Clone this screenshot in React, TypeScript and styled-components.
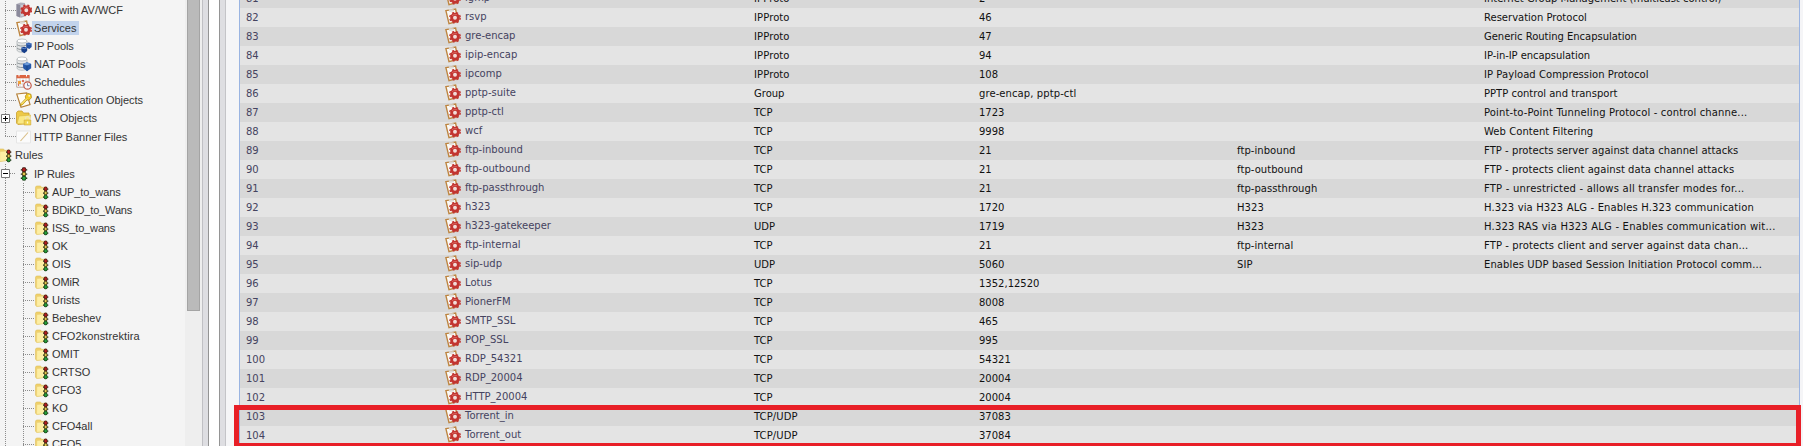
import React from 'react';
import styled, { createGlobalStyle } from 'styled-components';

const GlobalStyle = createGlobalStyle`
  * { box-sizing: border-box; }
  html, body { margin: 0; height: 446px; overflow: hidden; background: #f4f4f4; }
`;

const Page = styled.div`
  position: relative;
  display: flex;
  width: 1803px;
  height: 446px;
  overflow: hidden;
`;

const Sidebar = styled.nav`
  width: 185px;
  height: 446px;
  flex: none;
  overflow: hidden;
  padding-top: 1px;
  background: #f4f4f4;
  font: 11px/18px "Liberation Sans", Arial, sans-serif;
  color: #333;
`;

const TreeRow = styled.div<{ $h?: number }>`
  display: flex;
  align-items: center;
  height: ${p => p.$h ?? 18}px;
  white-space: pre;
`;

const RootRow = styled(TreeRow)`
  margin-left: -2px;
`;

const Guide = styled.span<{ $w: number; $branch?: boolean; $end?: boolean }>`
  flex: none;
  align-self: stretch;
  width: ${p => p.$w}px;
  background:
    repeating-linear-gradient(180deg, #8c8c8c 0 1px, transparent 1px 2px) 5px 0 / 1px ${p => (p.$end ? '50%' : '100%')} no-repeat,
    repeating-linear-gradient(90deg, #8c8c8c 0 1px, transparent 1px 2px) 5px 50% / ${p => (p.$branch ? '11px' : '0')} 1px no-repeat;
`;

const ToggleCell = styled.span`
  flex: none;
  display: flex;
  align-items: center;
  width: 16px;
  padding-left: 1px;
  align-self: stretch;
  background:
    repeating-linear-gradient(180deg, #8c8c8c 0 1px, transparent 1px 2px) 5px 0 / 1px 100% no-repeat,
    repeating-linear-gradient(90deg, #8c8c8c 0 1px, transparent 1px 2px) 10px 50% / 6px 1px no-repeat;
`;

const Toggle = styled.svg`
  display: block;
  flex: none;
`;

const Icon = styled.svg`
  display: block;
  flex: none;
`;

const TreeLabel = styled.span<{ $selected?: boolean; $spacing?: number }>`
  height: 14px;
  line-height: 14px;
  padding: 0 2px;
  letter-spacing: ${p => p.$spacing ?? 0}px;
  background: ${p => (p.$selected ? '#c2d3ec' : 'transparent')};
`;

const ScrollTrack = styled.div`
  flex: none;
  width: 17px;
  padding-left: 2px;
  background: #eeeeee;
`;

const ScrollThumb = styled.div`
  width: 13px;
  height: 311px;
  background: #bababa;
  border: solid #a4a4a4;
  border-width: 0 1px 1px;
`;

const Splitter = styled.div`
  flex: none;
  display: flex;
  justify-content: space-between;
  width: 23px;
  background: #fff;
`;

const SplitterEdge = styled.div<{ $side: 'left' | 'right' }>`
  width: ${p => (p.$side === 'left' ? 7 : 6)}px;
  background: #dedee2;
  border: solid #949494;
  border-width: ${p => (p.$side === 'left' ? '0 1px 0 1px' : '0 0 0 1px')};
  border-left-color: ${p => (p.$side === 'left' ? '#c0c0c4' : '#949494')};
`;

const Main = styled.main`
  flex: 1;
  padding: 0 3px 0 13px;
  border-left: 1px solid #c4c4c8;
  background: #f5f5f7;
`;

const Table = styled.div`
  height: 446px;
  overflow: hidden;
  border: solid #9ab4e2;
  border-width: 0 1px;
  font: 10px/19px "DejaVu Sans", Verdana, sans-serif;
  color: #111;
`;

const Rows = styled.div`
  margin-top: -11px;
`;

const Row = styled.div<{ $dark: boolean }>`
  display: grid;
  grid-template-columns: 199px 309px 225px 258px 247px 1fr;
  height: 19px;
  padding-left: 6px;
  background: ${p => (p.$dark ? '#d8d8d8' : '#e4e4e4')};
`;

const Cell = styled.span<{ $muted?: boolean; $spacing?: number }>`
  white-space: pre;
  color: ${p => (p.$muted ? '#45435f' : '#111')};
  letter-spacing: ${p => p.$spacing ?? 0}px;
`;

const NameCell = styled.span`
  display: flex;
  gap: 4px;
  height: 17px;
  line-height: 17px;
  color: #45435f;
  white-space: pre;
`;

const Highlight = styled.div`
  position: absolute;
  left: 234px;
  top: 405px;
  width: 1567px;
  height: 43px;
  border: 5px solid #e81f27;
`;

const gear = (cx: number, cy: number, r: number) => (
  <>
    <circle cx={cx} cy={cy} r={r - 1.9} fill="#f1dcd9" stroke="#c23430" strokeWidth="2.9" />
    <circle cx={cx} cy={cy} r={r - 0.1} fill="none" stroke="#c23430" strokeWidth="1.4" strokeDasharray={`${(r * Math.PI) / 8} ${(r * Math.PI) / 8}`} />
    <path d={`M${cx - 3} ${cy - 2}Q${cx - 1} ${cy - 4} ${cx + 2} ${cy - 3}`} fill="none" stroke="#de7069" strokeWidth=".8" />
  </>
);

const ServiceIcon = () => (
  <Icon width="16" height="17" viewBox="0 0 16 17">
    <path d="M.9 2.6 10.6 1 13 13.2 4 15.6z" fill="#fbfaf7" stroke="#bd8541" strokeWidth="1.4" />
    <path d="M3.6 1.3h5l.5 2-4.6.7z" fill="#dedad4" />
    {gear(10, 9.7, 5.3)}
  </Icon>
);

const AlgIcon = () => (
  <Icon width="16" height="16" viewBox="0 0 16 16">
    <path d="M.5 2 4.5.5 9 1v13.5l-4 1.3L.5 14z" fill="#b3b2be" />
    <path d="M.5 2 4 3v12.6L.5 14z" fill="#8b8a9b" />
    <path d="M5 4h3M5 6h3M5 13h3" stroke="#e3e3ea" />
    {gear(10.3, 8.3, 5.3)}
  </Icon>
);

const Drum = () => (
  <>
    <path d="M1 3v9c0 3 10 3 10 0V3z" fill="#e4e6e7" stroke="#a8adb0" strokeWidth=".7" />
    <ellipse cx="6" cy="3" rx="5" ry="2" fill="#fff" stroke="#a8adb0" strokeWidth=".7" />
    <path d="M1 6.5c1 2 9 2 10 0M1 10c1 2 9 2 10 0" fill="none" stroke="#8d9497" />
  </>
);

const IpPoolIcon = () => (
  <Icon width="16" height="16" viewBox="0 0 16 16">
    <Drum />
    <path d="M10.2 5.3 12.8 4.6l2.8.8v3.6L13.3 11l-3-1.4z" fill="#2453a5" />
    <path d="m5.4 9.6 2.7-.8 3 1V13l-2.7 2.2-3-1.9z" fill="#173f8b" />
    <path d="m10.5 5.6 2.5.7 2.3-.7M5.7 10l2.6.7 2.4-.7" fill="none" stroke="#6d95d8" strokeWidth=".8" />
  </Icon>
);

const NatPoolIcon = () => (
  <Icon width="16" height="16" viewBox="0 0 16 16">
    <Drum />
    <path d="m7 8 4-1.8L15.2 8v4.3L11 15.3l-3.8-3z" fill="#2458a8" />
    <path d="m7 8 4 1.4L15 7.8l-4-1.5z" fill="#6d9bd8" />
    <path d="M11 9.4v5.4" stroke="#174787" />
  </Icon>
);

const ScheduleIcon = () => (
  <Icon width="16" height="16" viewBox="0 0 16 16">
    <path d="M.7 1.7h12.5v11.5H.7z" fill="#fff" stroke="#b5a6a2" />
    <path d="M.5 1h13v3.3H.5z" fill="#dc6542" />
    <path d="M3 .5v2M10.5.5v2" stroke="#fff" />
    <path d="M4 4v9M7 4v9M10 4v5M1 7h12M1 10h8" stroke="#cbc3bf" strokeWidth=".7" />
    <path d="M2 7h3v3H2z" fill="#f1a13a" />
    <path d="M6 6h2v2H6zM2 10h1v2H2z" fill="#d7705d" />
    <circle cx="11.5" cy="11.5" r="3.7" fill="#f6f6fb" stroke="#c45a4a" strokeWidth="1.2" />
    <path d="M11.5 9.3v2.4h2" fill="none" stroke="#77809c" />
  </Icon>
);

const AuthIcon = () => (
  <Icon width="16" height="16" viewBox="0 0 16 16">
    <path d="M.7 2 10.7.8 14 12.5 5 15.2z" fill="#fffdf5" stroke="#b5813a" strokeWidth="1.2" />
    <path d="M5 11.5 9.7 6.6 9.3 4 11.8 1.3l3.2 1 .5 3.4L13 8.2l-2-.2-4.8 5L4 13.6z" fill="#f3cc25" stroke="#aa851b" strokeWidth=".7" />
    <path d="m5.5 12 5.5-5.5" stroke="#fff19a" />
    <circle cx="13.2" cy="3.8" r=".9" fill="#fff6cf" />
  </Icon>
);

const VpnIcon = () => (
  <Icon width="16" height="16" viewBox="0 0 16 16">
    <path d="M.5 2.5 2 1h4l1.5 2H13v10.5L2 14.5.5 13z" fill="#edc947" stroke="#c9a030" strokeWidth=".8" />
    <path d="m3 6 11.5-1-1.2 9L1 13.8z" fill="#fae883" stroke="#d9b640" strokeWidth=".6" />
    <path d="M9.5 10.2V8.6c0-2.6 4-2.6 4 0v1.6" fill="none" stroke="#efe5b8" strokeWidth="1.2" />
    <path d="M8.2 10h6.6v5H8.2z" fill="#f3d650" stroke="#cda638" strokeWidth=".6" />
    <path d="M11.5 11.5v2" stroke="#fffbd9" strokeWidth="1.3" />
  </Icon>
);

const BannerIcon = () => (
  <Icon width="16" height="16" viewBox="0 0 16 16">
    <path d="M.5 2h14v12H.5z" fill="#fbfbfb" stroke="#e6e6e6" />
    <path d="M4.5 12 12 3.5" stroke="#d8bd85" strokeWidth="1.1" />
  </Icon>
);

const Lamps = () => (
  <>
    <path d="M1.6 1h3.8v13.5H1.6z" fill="#28301c" />
    <path d="M0 3.5h7M0 8h7M0 12.3h7" stroke="#26321c" strokeWidth="1.4" />
    <circle cx="3.5" cy="3.2" r="2.1" fill="#b81c1e" stroke="#4d1712" strokeWidth=".8" />
    <circle cx="3.5" cy="7.7" r="1.9" fill="#e7c84e" stroke="#4c4114" strokeWidth=".8" />
    <circle cx="3.5" cy="12.2" r="2.1" fill="#27a23c" stroke="#164b1b" strokeWidth=".8" />
  </>
);

const LampIcon = () => (
  <Icon width="16" height="16" viewBox="0 0 16 16">
    <g transform="translate(4.8 .6) scale(.92 .95)"><Lamps /></g>
  </Icon>
);

const FolderIcon = () => (
  <Icon width="15" height="16" viewBox="0 0 15 16">
    <path d="M.4 3.2 1.4 2h4.2l1 1.5 5-.5v10L2 14.4.4 13.2z" fill="#f0d06a" stroke="#dcbf5e" strokeWidth=".6" />
    <path d="m1.8 4.6 9.8-.8-.4 9.6-9.6 1z" fill="#fdeea4" stroke="#e6cd74" strokeWidth=".5" />
    <g transform="translate(8 2) scale(.76 .9)"><Lamps /></g>
  </Icon>
);

const ToggleBox = ({ plus }: { plus?: boolean }) => (
  <Toggle width="9" height="9" viewBox="0 0 9 9">
    <path d="M.5.5h8v8h-8z" fill="#fff" stroke="#777" />
    <path d={plus ? 'M2 4.5h5M4.5 2v5' : 'M2 4.5h5'} stroke="#000" />
  </Toggle>
);

const objects: [string, React.FC, number, number][] = [
  ['ALG with AV/WCF', AlgIcon, 18, 0],
  ['Services', ServiceIcon, 18, 0.05],
  ['IP Pools', IpPoolIcon, 18, -0.15],
  ['NAT Pools', NatPoolIcon, 18, 0],
  ['Schedules', ScheduleIcon, 18, 0],
  ['Authentication Objects', AuthIcon, 18, -0.05],
  ['VPN Objects', VpnIcon, 18, 0],
  ['HTTP Banner Files', BannerIcon, 19, 0],
];

const ruleFolders: [string, number][] = [
  ['AUP_to_wans', -0.1],
  ['BDiKD_to_Wans', -0.15],
  ['ISS_to_wans', -0.15],
  ['OK', 0],
  ['OIS', 0],
  ['OMiR', -0.1],
  ['Urists', 0],
  ['Bebeshev', 0],
  ['CFO2konstrektira', 0.1],
  ['OMIT', 0],
  ['CRTSO', 0],
  ['CFO3', 0],
  ['KO', 0],
  ['CFO4all', 0],
  ['CFO5', 0],
];

type Service = { name: string; type: string; port: string; alg?: string; note?: string; spacing?: number };

const services: Service[] = [
  { name: 'igmp', type: 'IPProto', port: '2', note: 'Internet Group Management (multicast control)' },
  { name: 'rsvp', type: 'IPProto', port: '46', note: 'Reservation Protocol' },
  { name: 'gre-encap', type: 'IPProto', port: '47', note: 'Generic Routing Encapsulation', spacing: -0.03 },
  { name: 'ipip-encap', type: 'IPProto', port: '94', note: 'IP-in-IP encapsulation', spacing: -0.06 },
  { name: 'ipcomp', type: 'IPProto', port: '108', note: 'IP Payload Compression Protocol', spacing: 0.06 },
  { name: 'pptp-suite', type: 'Group', port: 'gre-encap, pptp-ctl', note: 'PPTP control and transport' },
  { name: 'pptp-ctl', type: 'TCP', port: '1723', note: 'Point-to-Point Tunneling Protocol - control channe...', spacing: 0.14 },
  { name: 'wcf', type: 'TCP', port: '9998', note: 'Web Content Filtering', spacing: 0.05 },
  { name: 'ftp-inbound', type: 'TCP', port: '21', alg: 'ftp-inbound', note: 'FTP - protects server against data channel attacks', spacing: 0.05 },
  { name: 'ftp-outbound', type: 'TCP', port: '21', alg: 'ftp-outbound', note: 'FTP - protects client against data channel attacks', spacing: 0.05 },
  { name: 'ftp-passthrough', type: 'TCP', port: '21', alg: 'ftp-passthrough', note: 'FTP - unrestricted - allows all transfer modes for...', spacing: 0.21 },
  { name: 'h323', type: 'TCP', port: '1720', alg: 'H323', note: 'H.323 via H323 ALG - Enables H.323 communication', spacing: 0.14 },
  { name: 'h323-gatekeeper', type: 'UDP', port: '1719', alg: 'H323', note: 'H.323 RAS via H323 ALG - Enables communication wit...', spacing: 0.2 },
  { name: 'ftp-internal', type: 'TCP', port: '21', alg: 'ftp-internal', note: 'FTP - protects client and server against data chan...', spacing: 0.1 },
  { name: 'sip-udp', type: 'UDP', port: '5060', alg: 'SIP', note: 'Enables UDP based Session Initiation Protocol comm...', spacing: 0.1 },
  { name: 'Lotus', type: 'TCP', port: '1352,12520' },
  { name: 'PionerFM', type: 'TCP', port: '8008' },
  { name: 'SMTP_SSL', type: 'TCP', port: '465' },
  { name: 'POP_SSL', type: 'TCP', port: '995' },
  { name: 'RDP_54321', type: 'TCP', port: '54321' },
  { name: 'RDP_20004', type: 'TCP', port: '20004' },
  { name: 'HTTP_20004', type: 'TCP', port: '20004' },
  { name: 'Torrent_in', type: 'TCP/UDP', port: '37083' },
  { name: 'Torrent_out', type: 'TCP/UDP', port: '37084' },
];

export default function App() {
  return (
    <Page>
      <GlobalStyle />
      <Sidebar>
        {objects.map(([label, Glyph, h, spacing], i) => (
          <TreeRow key={label} $h={h}>
            {label === 'VPN Objects' ? (
              <ToggleCell><ToggleBox plus /></ToggleCell>
            ) : (
              <Guide $w={16} $branch $end={i === objects.length - 1} />
            )}
            <Glyph />
            <TreeLabel $selected={label === 'Services'} $spacing={spacing}>{label}</TreeLabel>
          </TreeRow>
        ))}
        <RootRow>
          <FolderIcon />
          <TreeLabel>Rules</TreeLabel>
        </RootRow>
        <TreeRow $h={19}>
          <ToggleCell><ToggleBox /></ToggleCell>
          <LampIcon />
          <TreeLabel $spacing={-0.1}>IP Rules</TreeLabel>
        </TreeRow>
        {ruleFolders.map(([label, spacing]) => (
          <TreeRow key={label}>
            <Guide $w={18} />
            <Guide $w={17} $branch />
            <FolderIcon />
            <TreeLabel $spacing={spacing}>{label}</TreeLabel>
          </TreeRow>
        ))}
      </Sidebar>
      <ScrollTrack><ScrollThumb /></ScrollTrack>
      <Splitter>
        <SplitterEdge $side="left" />
        <SplitterEdge $side="right" />
      </Splitter>
      <Main>
        <Table>
          <Rows>
            {services.map(({ name, type, port, alg, note, spacing }, i) => (
              <Row key={name} $dark={i % 2 === 0}>
                <Cell $muted>{81 + i}</Cell>
                <NameCell><ServiceIcon />{name}</NameCell>
                <Cell $spacing={type.length > 6 ? 0.1 : 0}>{type}</Cell>
                <Cell $spacing={port.length > 10 ? 0.09 : 0}>{port}</Cell>
                <Cell $spacing={0.06}>{alg}</Cell>
                <Cell $spacing={spacing}>{note}</Cell>
              </Row>
            ))}
          </Rows>
        </Table>
      </Main>
      <Highlight />
    </Page>
  );
}
